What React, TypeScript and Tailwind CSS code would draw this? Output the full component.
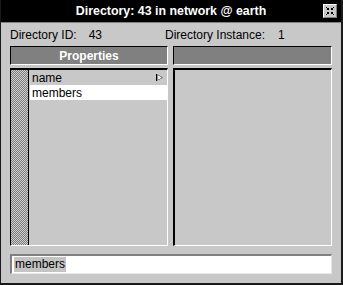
import React from 'react';

const CloseBox: React.FC = () => (
  <div className="absolute right-[4px] top-[4px] w-[14px] h-[14px] bg-[#c8c8c8] border-t border-l border-white border-b border-r border-b-[#808080] border-r-[#808080]">
    <svg viewBox="0 0 12 12" className="w-[12px] h-[12px]" shapeRendering="crispEdges">
      {/* four arrows pointing to the centre */}
      <path d="M2 2h1v1H2zM3 3h1v1H3zM4 3h1v2H3V4h1z" fill="#000" />
      <path d="M9 2h1v1H9zM8 3h1v1H8zM7 3h1v1h1v1H7z" fill="#000" />
      <path d="M2 9h1v1H2zM3 8h1v1H3zM3 7h2v2H4V8H3z" fill="#000" />
      <path d="M9 9h1v1H9zM8 8h1v1H8zM7 7h2v1H8v1H7z" fill="#000" />
    </svg>
  </div>
);

const Flag: React.FC = () => (
  <svg viewBox="0 0 7 7" className="w-[7px] h-[7px]" shapeRendering="crispEdges">
    <polygon points="1,0.5 6.5,3.5 1,6.5" fill="#e8e8e8" stroke="#8a8a8a" strokeWidth="1" />
    <rect x="0" y="0" width="1" height="7" fill="#000" />
  </svg>
);

// 1px checker texture for the list's left gutter
const Checker: React.FC = () => (
  <svg className="w-full h-full block" shapeRendering="crispEdges">
    <defs>
      <pattern id="chk" width="2" height="2" patternUnits="userSpaceOnUse">
        <rect width="2" height="2" fill="#cfcfcf" />
        <rect width="1" height="1" fill="#7c7c7c" />
        <rect x="1" y="1" width="1" height="1" fill="#7c7c7c" />
      </pattern>
    </defs>
    <rect width="100%" height="100%" fill="url(#chk)" />
  </svg>
);

const App: React.FC = () => {
  const rows = [
    { label: 'name', selected: false, flag: true },
    { label: 'members', selected: true, flag: false },
  ];

  return (
    <div className="w-[343px] h-[285px] bg-[#c8c8c8] border-l border-r-2 border-b-2 border-[#1a1a1a] flex flex-col font-['Liberation_Sans',Arial,sans-serif] text-[12px] text-black overflow-hidden">
      {/* Title bar */}
      <div className="relative h-[23px] shrink-0 bg-black border-b border-[#808080] flex items-center justify-center">
        <span className="text-white font-bold text-[12.4px] leading-none">Directory: 43 in network @ earth</span>
        <CloseBox />
      </div>

      {/* Body */}
      <div className="flex-1 flex flex-col px-[9px]">
        {/* Info labels */}
        <div className="h-[23px] grid grid-cols-[155px_1fr] items-center pt-[1px]">
          <div className="flex">
            <span>Directory ID:</span>
            <span className="ml-[12px]">43</span>
          </div>
          <div className="flex">
            <span>Directory Instance:</span>
            <span className="ml-[13px]">1</span>
          </div>
        </div>

        {/* Headers */}
        <div className="grid grid-cols-[158px_159px] gap-x-[5px]">
          <div className="h-[19px] bg-[#808080] border-t border-l border-black border-b border-r border-b-white border-r-white flex items-center justify-center">
            <span className="text-white font-bold leading-none">Properties</span>
          </div>
          <div className="h-[19px] bg-[#808080] border-t border-l border-black border-b border-r border-b-white border-r-white" />
        </div>

        {/* Lists */}
        <div className="grid grid-cols-[158px_159px] gap-x-[5px] mt-[3px]">
          <div className="h-[178px] flex border-t-2 border-l border-black border-b border-r border-b-white border-r-white">
            <div className="w-[18px] border-r border-black">
              <Checker />
            </div>
            <div className="flex-1 flex flex-col pl-[1px]">
              {rows.map((r) => (
                <div
                  key={r.label}
                  className={`h-[15px] flex items-center justify-between pl-[2px] pr-[4px] leading-none ${r.selected ? 'bg-white' : ''}`}
                >
                  <span>{r.label}</span>
                  {r.flag && <Flag />}
                </div>
              ))}
            </div>
          </div>
          <div className="h-[178px] border-t-2 border-l-2 border-black border-b border-r border-b-white border-r-white" />
        </div>

        {/* Text field */}
        <div className="mt-[8px] h-[20px] bg-white border-t-2 border-l-2 border-[#808080] border-b border-r border-b-[#e8e8e8] border-r-[#e8e8e8] flex items-center pl-[2px]">
          <span className="bg-[#c4c4c4] px-[1px] leading-[15px]">members</span>
        </div>
      </div>
    </div>
  );
};

export default App;
